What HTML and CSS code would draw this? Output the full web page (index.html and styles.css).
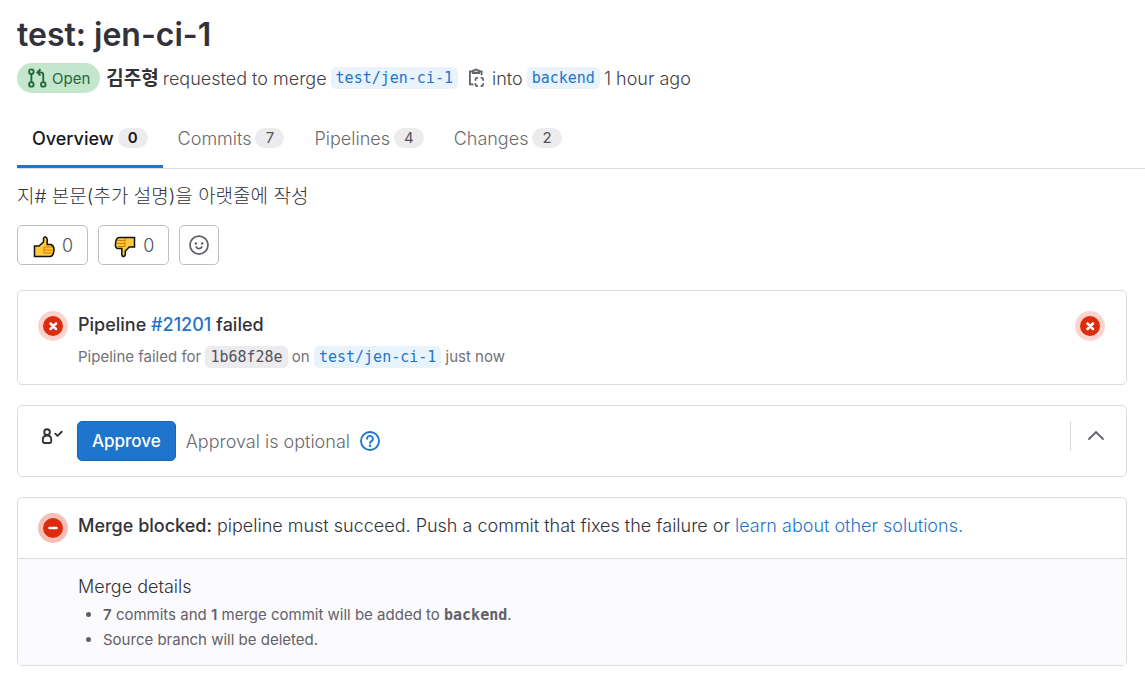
FILE: index.html
```html
<!DOCTYPE html>
<html lang="ko">
<head>
<meta charset="utf-8">
<title>test: jen-ci-1</title>
<link rel="stylesheet" href="styles.css">
</head>
<body>
<main class="page">
  <header class="inset">
    <h1 class="title">test: jen-ci-1</h1>
    <div class="meta">
      <span class="state">
        <svg class="icon-md" viewBox="0 0 16 16" fill="none" stroke="currentColor" stroke-width="1.5"><circle cx="3.500" cy="2.900" r="1.800"/><circle cx="3.500" cy="13.100" r="1.800"/><circle cx="13" cy="13.100" r="1.800"/><path d="M3.500 4.800v6.400M13 11.200V5.500a2 2 0 0 0-2-2H8.500M10.800 1 8.300 3.500 10.800 6"/></svg>
        Open
      </span>
      <strong class="author">김주형</strong>
      <span>requested to merge</span>
      <a class="ref" href="#source">test/jen-ci-1</a>
      <button class="copy" type="button" aria-label="Copy branch name">
        <svg class="icon-md" viewBox="0 0 20 20" fill="none" stroke="currentColor" stroke-width="1.800"><path d="M5 3.500H1.900v12.800h3.600M11 3.500h2.600v3.700"/><path d="M5 5V2.700h1.600a1.400 1.400 0 0 1 2.800 0H11V5z"/><path d="M7.500 12.800v-1.500q0-1.400 1.400-1.400h1M12.700 9.900h1q1.400 0 1.400 1.400v1.500M15.100 15.200v1.400q0 1.400-1.400 1.400h-1M9.900 18h-1q-1.400 0-1.400-1.400v-1.400"/></svg>
      </button>
      <span>into</span>
      <a class="ref" href="#target">backend</a>
      <span>1 hour ago</span>
    </div>
  </header>

  <nav class="tabs">
    <a class="tab tab-active" href="#overview">Overview <span class="count">0</span></a>
    <a class="tab" href="#commits">Commits <span class="count">7</span></a>
    <a class="tab" href="#pipelines">Pipelines <span class="count">4</span></a>
    <a class="tab" href="#changes">Changes <span class="count">2</span></a>
  </nav>

  <div class="inset">
    <p class="description">지# 본문(추가 설명)을 아랫줄에 작성</p>
    <div class="reactions">
      <button class="reaction" type="button" aria-label="Thumbs up 0">
        <svg class="thumb" viewBox="0 0 22 22"><path d="M1.500 10h4.500l4.500-4V2.500q.5-1.800 2-1.500 1.700.5 1.700 2.500v5h3.800q3 1.500 3 5l-.5 3.500q-1 3.500-3.500 3.500h-15.500z" fill="#ffc83d" stroke="#111" stroke-width="1.500"/><path d="M11 11h8.500M11 14h9M11 17h8.500M11 11v6" fill="none" stroke="#d67d00" stroke-width="1"/></svg>
        <span>0</span>
      </button>
      <button class="reaction" type="button" aria-label="Thumbs down 0">
        <svg class="thumb" viewBox="0 0 22 22"><path d="M20.500 1.500h-15Q3 1.500 2 4.500L1.500 8.500q-.5 2.500 1.500 4h4.800v6q.4 2.300 2 2 1.500-.4 1.500-2V15l4-4h5.200z" fill="#ffc83d" stroke="#111" stroke-width="1.500"/><path d="M11 4.500H3.500M11 7.500H3M11 10.500H3.500M11 2.500v8" fill="none" stroke="#d67d00" stroke-width="1"/></svg>
        <span>0</span>
      </button>
      <button class="reaction reaction-add" type="button" aria-label="Add reaction">
        <svg class="icon-md" viewBox="0 0 16 16"><circle cx="8" cy="8" r="7.200" fill="none" stroke="currentColor" stroke-width="1.400"/><circle cx="5.500" cy="6.700" r="1" fill="currentColor"/><circle cx="10.500" cy="6.700" r="1" fill="currentColor"/><path d="M5.800 9.600a2.500 2.500 0 0 0 4.400 0" fill="none" stroke="currentColor" stroke-width="1.400" stroke-linecap="round"/></svg>
      </button>
    </div>

    <section class="card pipeline">
      <svg class="status" viewBox="0 0 30 30"><circle cx="15" cy="15" r="15" fill="#fdd4cd"/><circle cx="15" cy="15" r="10" fill="#dd2b0e"/><path d="m12.500 12.500 5.500 5.500M18 12.500 12.500 18" stroke="#fff" stroke-width="2.500" stroke-linecap="round"/></svg>
      <div class="grow">
        <h2 class="heading">Pipeline <a class="link" href="#21201">#21201</a> failed</h2>
        <p class="small">Pipeline failed for <a class="sha" href="#commit">1b68f28e</a> on <a class="ref" href="#source">test/jen-ci-1</a> just now</p>
      </div>
      <svg class="status" viewBox="0 0 30 30"><circle cx="15" cy="15" r="15" fill="#fdd4cd"/><circle cx="15" cy="15" r="10" fill="#dd2b0e"/><path d="m12.500 12.500 5.500 5.500M18 12.500 12.500 18" stroke="#fff" stroke-width="2.500" stroke-linecap="round"/></svg>
    </section>

    <section class="card approval">
      <svg class="approver" viewBox="0 0 20 20" fill="none" stroke="#333238" stroke-width="1.700"><circle cx="5.500" cy="5.500" r="2.600"/><path d="M5.500 8.600c-2.500 0-3.800 1.400-3.800 3.400v2.200q0 1.200 1.200 1.200h5.200q1.200 0 1.200-1.200V12c0-2-1.300-3.400-3.800-3.400z" stroke-linejoin="round"/><path d="m13 7 2 2 3.800-3.800" stroke-linecap="round" stroke-linejoin="round"/></svg>
      <div class="approval-body">
        <button class="approve" type="button">Approve</button>
        <span class="muted">Approval is optional</span>
        <a class="help" href="#help" aria-label="About approvals"><svg class="icon-md" viewBox="0 0 16 16"><circle cx="8" cy="8" r="7.200" fill="none" stroke="currentColor" stroke-width="1.500"/><path d="M5.700 6.200A2.300 2.300 0 1 1 8.900 8.300Q8 8.700 8 9.500" fill="none" stroke="currentColor" stroke-width="1.500" stroke-linecap="round"/><circle cx="8" cy="11.700" r="1" fill="currentColor"/></svg></a>
      </div>
      <div class="toggle">
        <button class="collapse" type="button" aria-label="Collapse"><svg class="icon-md" viewBox="0 0 20 20"><path d="m3 13 7-7 7 7" fill="none" stroke="currentColor" stroke-width="1.800" stroke-linecap="round"/></svg></button>
      </div>
    </section>

    <section class="card">
      <div class="blocked">
        <svg class="status" viewBox="0 0 30 30"><circle cx="15" cy="15" r="15" fill="#f5beb7"/><circle cx="15" cy="15" r="10" fill="#dd2b0e"/><path d="M11.500 15h7" stroke="#fff" stroke-width="2.500" stroke-linecap="round"/></svg>
        <p class="blocked-text"><strong>Merge blocked:</strong> pipeline must succeed. Push a commit that fixes the failure or <a class="link" href="#solutions">learn about other solutions.</a></p>
      </div>
      <div class="details">
        <h3 class="details-title">Merge details</h3>
        <ul class="details-list">
          <li><strong>7</strong> commits and <strong>1</strong> merge commit will be added to <strong class="mono">backend</strong>.</li>
          <li>Source branch will be deleted.</li>
        </ul>
      </div>
    </section>
  </div>
</main>
</body>
</html>
```

FILE: styles.css
```css
* { box-sizing: border-box; }
body {
  margin: 0;
  background: #fff;
  color: #333238;
  font-family: Inter, "Noto Sans CJK KR", sans-serif;
  font-size: 18px;
  font-weight: 350;
  line-height: 25px;
}
h1, h2, h3, p, ul { margin: 0; padding: 0; }
a { text-decoration: none; color: inherit; }
button { font: inherit; color: inherit; cursor: pointer; }
svg { display: block; flex: none; }
strong { font-weight: 600; }

.page { padding: 15px 0 12px 17px; }
.inset { padding-right: 18px; }
.icon-md { width: 20px; height: 20px; }

.title { font-size: 32px; line-height: 40px; font-weight: 600; }
.meta { display: flex; flex-wrap: wrap; align-items: center; gap: 4px; margin-top: 8px; color: #434248; }
.state {
  display: flex; align-items: center; gap: 5px;
  height: 30px; padding: 0 10px; margin-right: 2px;
  border-radius: 15px; background: #c3e6cd; color: #24663b; font-size: 15px; font-weight: 400;
}
.author { color: #333238; font-size: 19px; }
.ref, .sha, .mono { font-family: "DejaVu Sans Mono", monospace; font-size: 15px; font-weight: 400; }
.ref, .sha { padding: 2px 5px; border-radius: 5px; line-height: 18px; }
.ref { background: #e9f3fc; color: #1f75cb; }
.sha { background: #ececef; color: #535158; }
.mono { font-weight: 600; line-height: 1; }
.copy { padding: 0; margin-left: 6px; border: 0; background: none; color: #626168; }

.tabs { display: flex; margin-top: 15px; border-bottom: 1px solid #dcdcde; }
.tab {
  display: flex; align-items: center; gap: 4px;
  height: 60px; padding: 3px 15px 0;
  border-bottom: 3px solid transparent; color: #6b6a70;
}
.tab-active { border-color: #1f75cb; color: #18171d; font-weight: 500; }
.count {
  min-width: 29px; padding: 0 10px; border-radius: 10px;
  background: #ececef; font-size: 15px; line-height: 20px; font-weight: 400; text-align: center; color: #535158;
}
.tab-active .count { color: #18171d; font-weight: 600; }

.description { margin-top: 15px; font-size: 19px; font-weight: 300; }
.reactions { display: flex; gap: 10px; margin-top: 16px; }
.reaction {
  display: flex; align-items: center; gap: 7px;
  height: 40px; padding: 0 14px 0 15px;
  border: 1px solid #bfbfc3; border-radius: 5px; background: #fff; color: #535158;
}
.reaction-add { padding: 0 9px; color: #626168; }
.thumb { width: 22px; height: 22px; margin-top: 4px; }

.card { border: 1px solid #dcdcde; border-radius: 5px; margin-top: 20px; overflow: hidden; }
.status { width: 30px; height: 30px; }
.pipeline { display: flex; gap: 10px; padding: 20px 21px 14px 20px; margin-top: 25px; }
.grow { flex: 1; min-width: 0; }
.heading { font-size: 18px; line-height: 28px; font-weight: 500; }
.small { margin-top: 4px; font-size: 15px; line-height: 27px; font-weight: 400; color: #737278; }
.link { color: #1f75cb; }

.approval { display: flex; gap: 14px; padding: 15px 20px 15px 23px; }
.approver { width: 22px; height: 22px; margin-top: 5px; }
.approval-body { display: flex; flex: 1; align-items: center; gap: 10px; }
.approve {
  height: 40px; padding: 0 14px; border: 1px solid #1068bf; border-radius: 5px;
  background: #1f75cb; color: #fff; font-size: 17px; font-weight: 500;
}
.muted { color: #6b6a70; }
.help { color: #1f75cb; }
.toggle { height: 30px; padding-left: 15px; border-left: 1px solid #dcdcde; }
.collapse { padding: 5px 0; border: 0; background: none; color: #626168; }

.blocked { display: flex; gap: 10px; padding: 15px 20px; }
.blocked-text { line-height: 26px; }
.blocked-text strong { font-weight: 550; }
.details { padding: 15px 20px 13px 60px; border-top: 1px solid #dcdcde; background: #fbfafd; }
.details-title { font-size: 18px; line-height: 26px; font-weight: 350; }
.details-list { margin-top: 2px; padding-left: 25px; font-size: 15px; line-height: 25px; font-weight: 400; color: #626168; }
```
